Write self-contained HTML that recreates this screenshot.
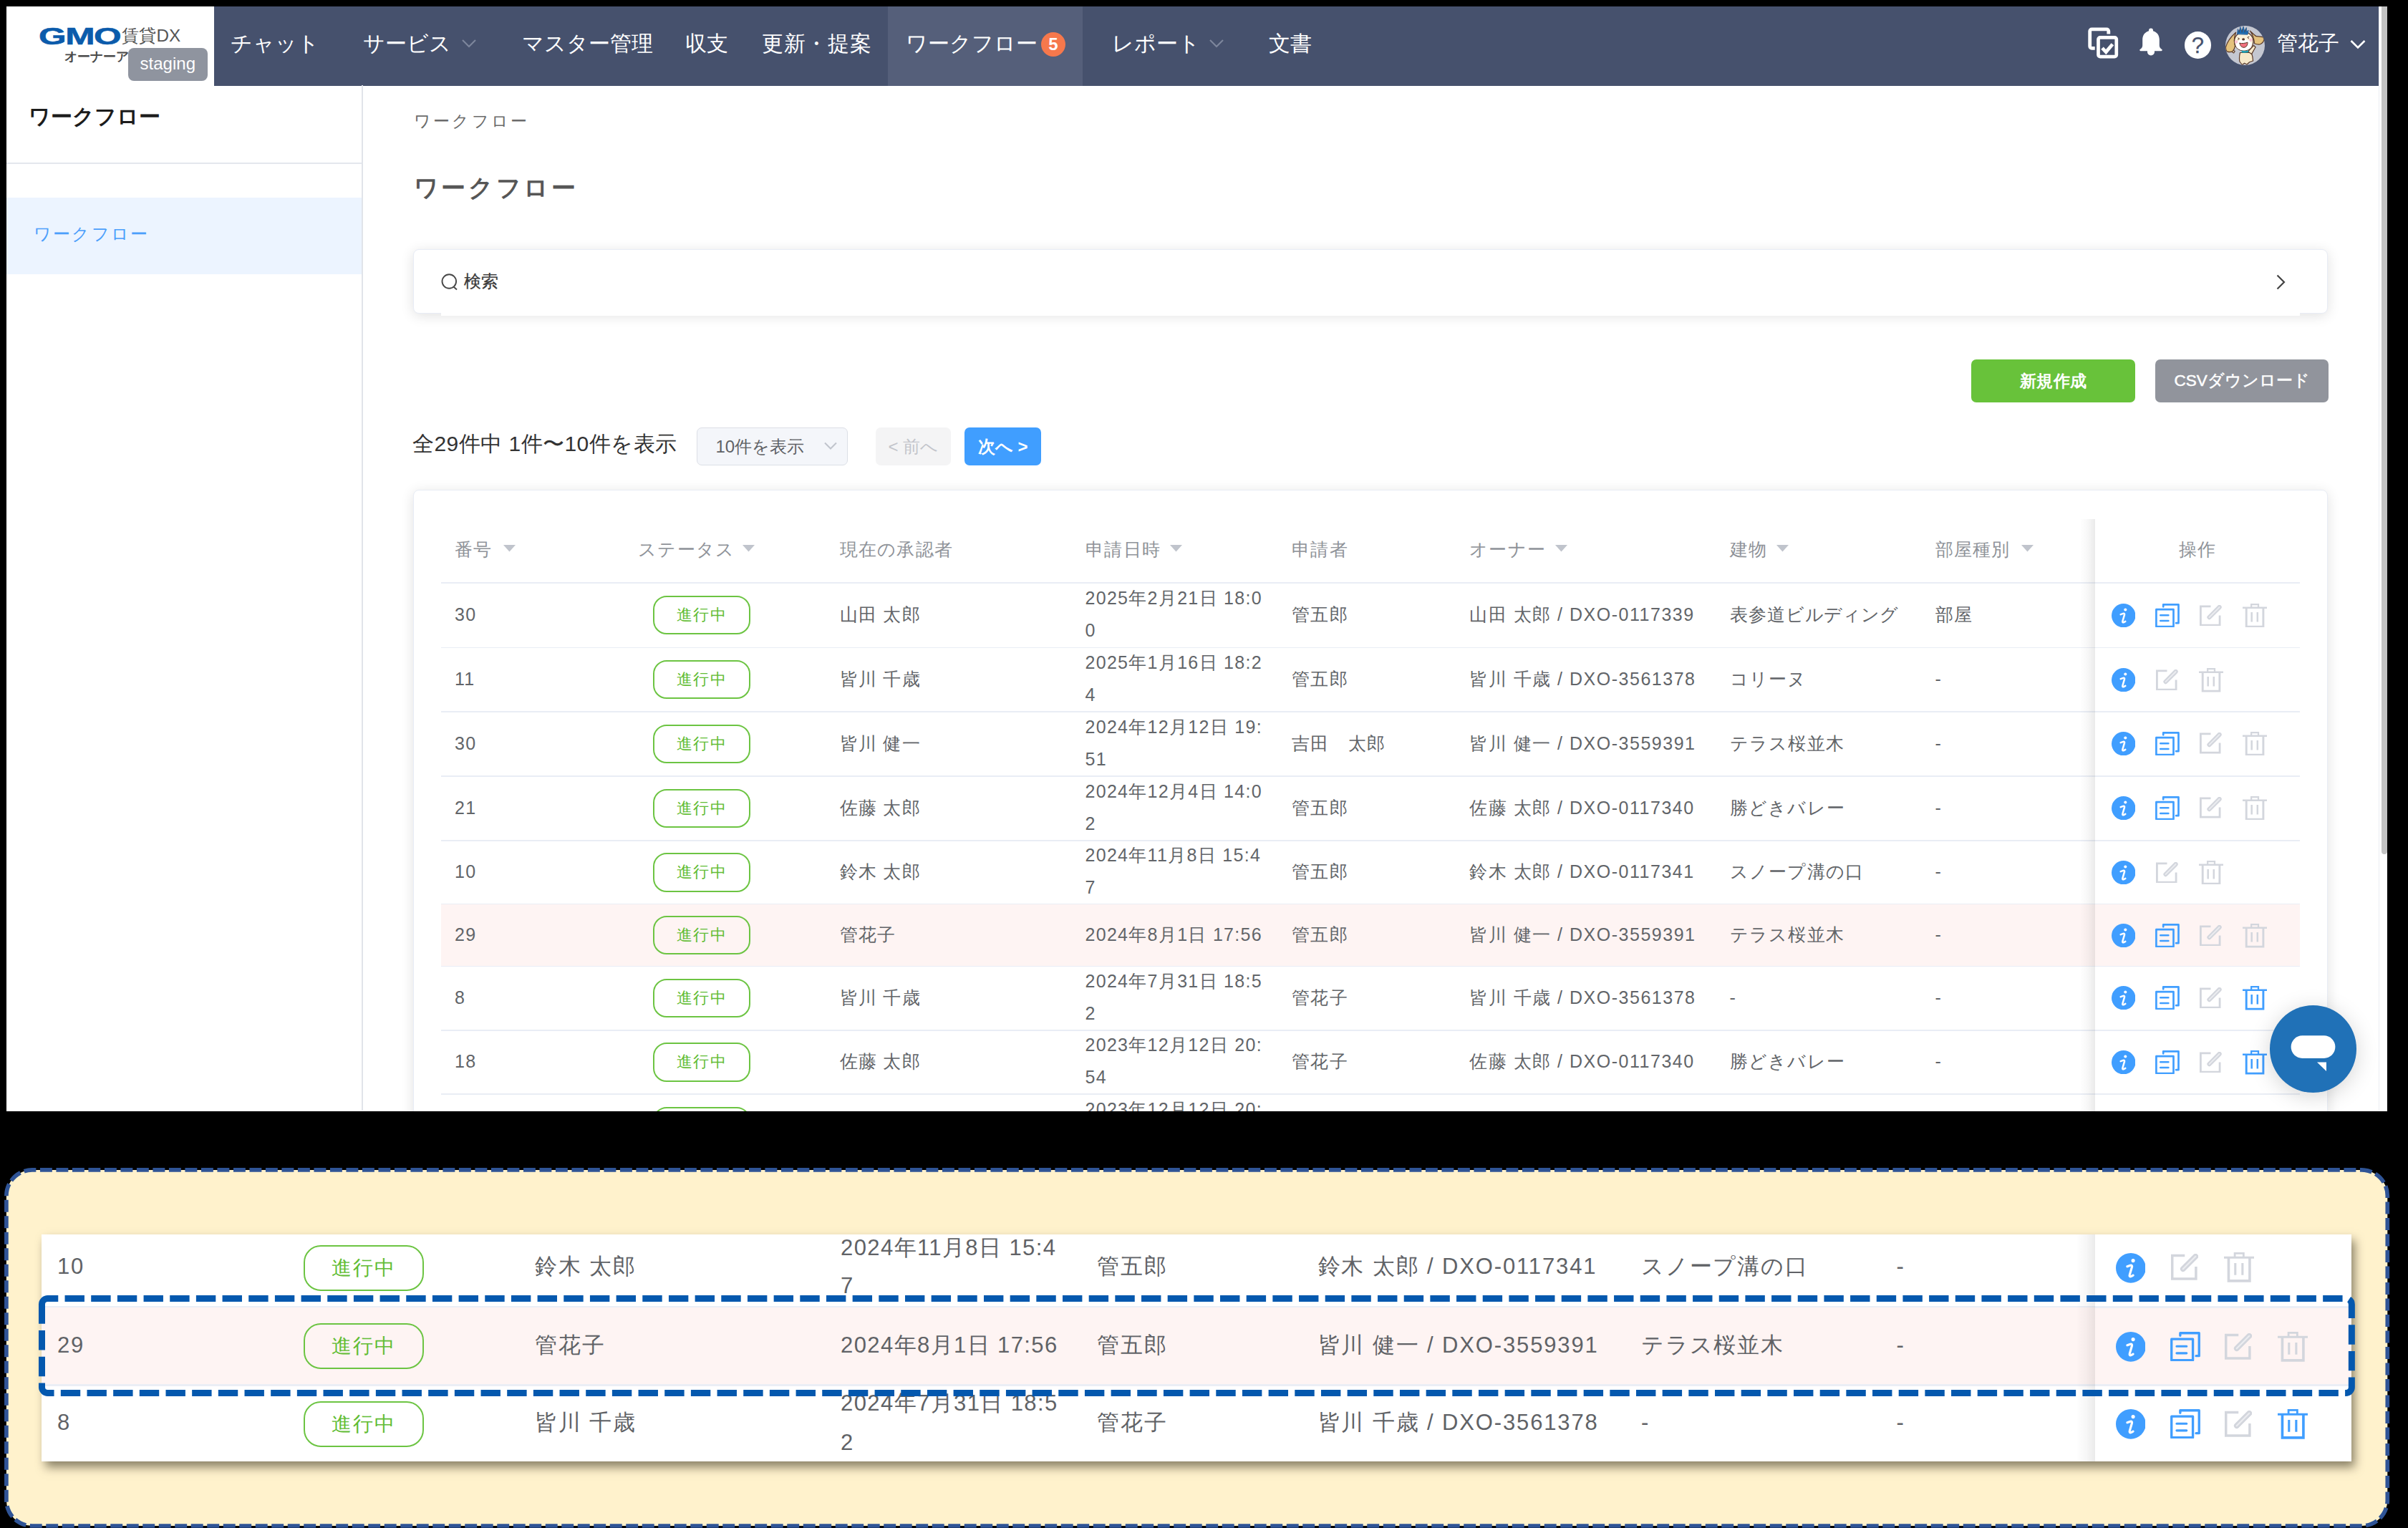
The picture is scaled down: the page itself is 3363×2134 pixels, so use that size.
<!DOCTYPE html>
<html lang="ja">
<head>
<meta charset="utf-8">
<title>ワークフロー</title>
<style>
html,body{margin:0;padding:0;}
body{width:3363px;height:2134px;background:#000;overflow:hidden;position:relative;
 font-family:"Liberation Sans",sans-serif;}
div,svg,span.a{position:absolute;box-sizing:border-box;}
div{white-space:nowrap;}
.j{position:static;display:inline-block;vertical-align:top;text-align-last:justify;}
#shot{left:9px;top:9px;width:3325px;height:1542.7px;overflow:hidden;background:#fff;}
#shot>.in{left:-9px;top:-9px;width:3363px;height:2134px;}
.t{letter-spacing:1.3px;}.to{letter-spacing:1.52px;}
.hl{left:616px;width:2596px;height:1.6px;background:#e9edf5;}
.bd{border:2px solid #6cc442;border-radius:19px;color:#62bd35;text-align:center;}
#zoom{left:58px;top:1724px;width:3226px;height:317px;background:#fff;box-shadow:4.5px 8px 13px rgba(20,15,0,.5);}
#zoom>.in{left:-58px;top:-1724px;width:3363px;height:2134px;overflow:visible;}
#zoomclip{left:0;top:0;width:3226px;height:317px;overflow:hidden;}
.z{letter-spacing:1.75px;}.zd{letter-spacing:1.4px;}.zo{letter-spacing:1.87px;}
</style>
</head>
<body>

<div id="shot"><div class="in">
<div style="left:298.5px;top:9px;width:3023.5px;height:110.6px;background:#46516d;"></div>
<div style="left:1240px;top:9px;width:272px;height:110.6px;background:#555f7a;"></div>
<div style="left:53.5px;top:33px;height:34px;line-height:34px;font-size:34px;font-weight:bold;color:#0b5bab;transform-origin:0 50%;transform:scaleX(1.46);letter-spacing:-1px;-webkit-text-stroke:.6px #0b5bab;">GMO</div>
<div style="left:170px;top:33px;height:34px;line-height:34px;font-size:24px;color:#555;transform-origin:0 50%;transform:scaleX(1.01);">賃貸DX</div>
<div style="left:89.5px;top:66.5px;height:24px;line-height:24px;font-size:18px;color:#4a4a4a;font-weight:bold;width:126.02px;text-align-last:justify;">オーナーアプリ</div>
<div style="left:179px;top:66.5px;width:110.6px;height:46.1px;background:#8f949f;border-radius:8px;"></div>
<div style="left:179px;top:73.5px;height:30px;line-height:30px;font-size:24px;color:#fff;width:110.6px;text-align:center;">staging</div>
<div style="left:322px;top:41px;height:40px;line-height:40px;font-size:30px;color:#fff;width:124.02px;text-align-last:justify;">チャット</div>
<div style="left:506.6px;top:41px;height:40px;line-height:40px;font-size:30px;color:#fff;width:123.02px;text-align-last:justify;">サービス</div>
<div style="left:729px;top:41px;height:40px;line-height:40px;font-size:30px;color:#fff;width:183.02px;text-align-last:justify;">マスター管理</div>
<div style="left:956.8px;top:41px;height:40px;line-height:40px;font-size:30px;color:#fff;width:60.02px;text-align-last:justify;">収支</div>
<div style="left:1064px;top:41px;height:40px;line-height:40px;font-size:30px;color:#fff;letter-spacing:.7px;width:153.52px;text-align-last:justify;">更新・提案</div>
<div style="left:1265px;top:41px;height:40px;line-height:40px;font-size:30px;color:#fff;width:184.02px;text-align-last:justify;">ワークフロー</div>
<div style="left:1553px;top:41px;height:40px;line-height:40px;font-size:30px;color:#fff;width:123.02px;text-align-last:justify;">レポート</div>
<div style="left:1772px;top:41px;height:40px;line-height:40px;font-size:30px;color:#fff;width:60.02px;text-align-last:justify;">文書</div>
<svg style="left:643.7px;top:53px" width="22" height="16" viewBox="0 0 22 16" fill="none" stroke="#7d869c" stroke-width="2.2"><path d="M2 3l9 9l9-9"/></svg>
<svg style="left:1688px;top:53px" width="22" height="16" viewBox="0 0 22 16" fill="none" stroke="#7d869c" stroke-width="2.2"><path d="M2 3l9 9l9-9"/></svg>
<div style="left:1454px;top:45px;width:34px;height:34px;background:#f6784c;border-radius:50%;"></div>
<div style="left:1454px;top:45px;height:34px;line-height:34px;font-size:24px;color:#fff;width:34px;text-align:center;font-weight:bold;">5</div>
<svg style="left:2914px;top:36px" width="47" height="47" viewBox="0 0 47 47" fill="none" stroke="#fff" stroke-width="4.8" stroke-linejoin="round"><path d="M11.7 31.3H7.4a2.7 2.7 0 0 1-2.7-2.7V7.5a2.7 2.7 0 0 1 2.7-2.7H28.1a2.7 2.7 0 0 1 2.7 2.7V11.4"/><rect x="16.5" y="16.3" width="25.3" height="26.8" rx="2.6" stroke-width="4.7"/><path d="M22 31.2l5.2 5.4L36.4 25.8" stroke-width="4.8" stroke-linejoin="miter"/></svg>
<svg style="left:2986px;top:38px" width="36" height="42" viewBox="0 0 36 42" fill="#fff"><path d="M18 1.5a3 3 0 0 1 3 3v.8c5.5 1.4 8.8 6.2 8.8 12v8.2c0 2.5 1.5 4.2 3.5 5.6c.8.6.5 2.1-.7 2.1H3.4c-1.2 0-1.5-1.5-.7-2.1c2-1.4 3.5-3.1 3.5-5.6v-8.2c0-5.8 3.3-10.6 8.8-12v-.8a3 3 0 0 1 3-3z"/><path d="M13 33h10v1.5a5 5 0 0 1-10 0z"/></svg>
<div style="left:3050.5px;top:44px;width:37.5px;height:37.5px;background:#fff;border-radius:50%;"></div>
<div style="left:3050.5px;top:45.8px;height:36px;line-height:36px;font-size:31px;color:#46516d;width:37.5px;text-align:center;-webkit-text-stroke:.25px #46516d;">?</div>
<svg style="left:3108px;top:36px" width="55" height="55" viewBox="0 0 55 55"><defs><clipPath id="av"><circle cx="27.5" cy="27.5" r="27.5"/></clipPath></defs><circle cx="27.5" cy="27.5" r="27.5" fill="#c4c7d1"/><g clip-path="url(#av)" stroke="#5b3a29" stroke-width="1.2" stroke-linejoin="round" stroke-linecap="round"><path d="M20.5 37.5c-1 4-1.3 8.5-.6 12.5l3.5 4.5l3.2-2.3l3.4 1.8l3.6-3.2l5-1.8c-.3-4-1-8-2.3-11.5z" fill="#f6e8c9"/><path d="M31.5 36l8-8.5l2.6 2.3l-5.6 9.8z" fill="#f6e8c9"/><path d="M13.2 35.5l-3.5-2l-1.5 2.5l3.5 2z" fill="#f6e8c9"/><path d="M14.6 9.2C8 15 2.5 22.5.6 29.5c-.4 3 .6 5.5 2 6.6c2.6.7 5.6.5 7.3-.2c2-2.3 3.2-5.2 3.6-7.8c-1.8-6-1.2-13 1.1-18.9z" fill="#e4c27d"/><path d="M34.5 7.2c3 2.8 6 5.8 8.6 7.5c3.5.3 7.4.2 9.8 1.3c1 2 .9 4.2.2 5.8c-1.3 2-3.2 3.5-5 4.2c-2.7.2-5.5-.3-7.6-1.3c-.4-6-2.5-12.5-6-17.5z" fill="#e4c27d"/><ellipse cx="25.7" cy="21.8" rx="13.2" ry="13.1" fill="#fdf3dc"/><ellipse cx="25.8" cy="26.8" rx="11.2" ry="7.8" fill="#fff" stroke="none"/><path d="M16.5 11.5l.8-7l2 3.8l1.5-6.8l2 6l2.3-6.5l1.5 6.5l2.7-5l.3 6l2.5-2.5l-1 6z" fill="#1d6db3" stroke="#1d4f86" stroke-width=".700"/><path d="M19 9.5l.8-4M23 9l.6-4M27 9l.8-3.5" stroke-width=".700" fill="none"/><ellipse cx="25.1" cy="18.9" rx="2" ry="1.6" fill="#5b3a29" stroke="none"/><path d="M17.5 17l2 1.2l-2 1.2M33 15.3l-2.2 1l1.8 1.5" fill="none" stroke-width="1"/><circle cx="15" cy="22.5" r="2.2" fill="#f9c4d4" stroke="none"/><circle cx="35.5" cy="19.8" r="2.2" fill="#f9c4d4" stroke="none"/><path d="M20 24.3c3.5.6 7.5.2 11-1.2c.2 3.8-1.8 7-5 7.2c-3.2.2-5.7-2.5-6-6z" fill="#f0707f" stroke-width="1"/><path d="M22.7 34.6c3 .8 6.4.7 9.4-.3v2.7c-3 1-6.4 1.1-9.4.3z" fill="#19a0b5" stroke="none"/></g></svg>
<div style="left:3180px;top:40px;height:40px;line-height:40px;font-size:29px;color:#fff;width:87.02px;text-align-last:justify;">管花子</div>
<svg style="left:3281px;top:54px" width="24" height="17" viewBox="0 0 24 17" fill="none" stroke="#fff" stroke-width="2.6"><path d="M2.5 3l9.5 9.5L21.5 3"/></svg>
<div style="left:3322px;top:9px;width:12px;height:1542px;background:#fff;border-left:1px solid #eceef2;"></div>
<div style="left:3326px;top:9px;width:8px;height:1184px;background:#c3c3c3;border-radius:0 0 5px 5px;"></div>
<div style="left:505px;top:119.3px;width:1.5px;height:1431.7px;background:#e1e4ea;"></div>
<div style="left:40px;top:143.3px;height:40px;line-height:40px;font-size:29.8px;color:#1c1c1c;font-weight:bold;width:184.02px;text-align-last:justify;">ワークフロー</div>
<div style="left:9px;top:227px;width:496px;height:2px;background:#e4e7ed;"></div>
<div style="left:9px;top:276px;width:496px;height:107px;background:#ecf4ff;"></div>
<div style="left:47px;top:309.5px;height:34px;line-height:34px;font-size:24px;color:#4c9ffb;letter-spacing:2.2px;width:161.22px;text-align-last:justify;">ワークフロー</div>
<div style="left:578px;top:152.5px;height:32px;line-height:32px;font-size:23px;color:#6b6b6b;letter-spacing:3.2px;width:161.22px;text-align-last:justify;">ワークフロー</div>
<div style="left:577.5px;top:238.5px;height:46px;line-height:46px;font-size:34px;color:#565656;font-weight:bold;letter-spacing:3.7px;width:230.22px;text-align-last:justify;">ワークフロー</div>
<div style="left:577px;top:348px;width:2674px;height:89.6px;background:#fff;border:1.5px solid #e8ecf5;border-radius:8px;box-shadow:0 3px 18px rgba(0,0,0,.12);"></div>
<div style="left:615.5px;top:430px;width:2596.5px;height:10.6px;background:#fff;"></div>
<svg style="left:615px;top:381px" width="26" height="25" viewBox="0 0 26 25" fill="none" stroke="#484848" stroke-width="1.9"><circle cx="12.3" cy="12" r="9.8"/><path d="M18.5 19.5l4.5 4"/></svg>
<div style="left:648px;top:377px;height:32px;line-height:32px;font-size:23.5px;color:#3a3a3a;-webkit-text-stroke:.25px #3a3a3a;width:48.02px;text-align-last:justify;">検索</div>
<svg style="left:3176px;top:382px" width="18" height="24" viewBox="0 0 18 24" fill="none" stroke="#444" stroke-width="2.2"><path d="M4.5 2.5l9.5 9.5L4.5 21.5"/></svg>
<div style="left:2753.4px;top:501.7px;width:228.6px;height:60.3px;background:#68c23a;border-radius:7px;"></div>
<div style="left:2753.4px;top:515.5px;height:32px;line-height:32px;font-size:23px;color:#fff;width:228.6px;text-align:center;font-weight:bold;letter-spacing:.500px;"><span class="j" style="width:94.02px;">新規作成</span></div>
<div style="left:3010px;top:501.7px;width:242.3px;height:60.3px;background:#91949c;border-radius:7px;"></div>
<div style="left:3010px;top:515.5px;height:32px;line-height:32px;font-size:22.5px;color:#fff;width:242.3px;text-align:center;-webkit-text-stroke:.5px #fff;"><span class="j" style="width:189.29px;">CSVダウンロード</span></div>
<div style="left:576px;top:599px;height:42px;line-height:42px;font-size:30px;color:#333;letter-spacing:.45px;width:369.54px;text-align-last:justify;">全29件中 1件〜10件を表示</div>
<div style="left:973.4px;top:597px;width:210.3px;height:52.7px;background:#f4f6fa;border:1.5px solid #dcdfe6;border-radius:7px;"></div>
<div style="left:999.5px;top:606.5px;height:34px;line-height:34px;font-size:24px;color:#5f6266;width:123.72px;text-align-last:justify;">10件を表示</div>
<svg style="left:1150px;top:616px" width="20" height="14" viewBox="0 0 20 14" fill="none" stroke="#c0c4cc" stroke-width="2"><path d="M2 2.5l8 8l8-8"/></svg>
<div style="left:1222.6px;top:597px;width:105.4px;height:52.7px;background:#f4f4f5;border-radius:7px;"></div>
<div style="left:1222.6px;top:606.5px;height:34px;line-height:34px;font-size:24px;color:#c3c5cb;width:105.4px;text-align:center;"><span class="j" style="width:69.71px;">&lt; 前へ</span></div>
<div style="left:1347px;top:597px;width:107.3px;height:52.7px;background:#409eff;border-radius:7px;"></div>
<div style="left:1347px;top:606.5px;height:34px;line-height:34px;font-size:24px;color:#fff;width:107.3px;text-align:center;font-weight:bold;"><span class="j" style="width:69.71px;">次へ &gt;</span></div>
<div style="left:577px;top:684px;width:2674px;height:1016px;background:#fff;border:1.5px solid #e8ecf5;border-radius:8px;box-shadow:0 3px 18px rgba(0,0,0,.12);"></div>
<div class="t" style="left:635px;top:749px;height:36px;line-height:36px;font-size:25px;color:#8f9399;width:52.63px;text-align-last:justify;">番号</div>
<svg style="left:703px;top:761.2px" width="17" height="9.5" viewBox="0 0 17 9.5"><path d="M0 0h17l-8.5 9.5z" fill="#c0c4cc"/></svg>
<div class="t" style="left:891px;top:749px;height:36px;line-height:36px;font-size:25px;color:#8f9399;width:135.52px;text-align-last:justify;">ステータス</div>
<svg style="left:1036.5px;top:761.2px" width="17" height="9.5" viewBox="0 0 17 9.5"><path d="M0 0h17l-8.5 9.5z" fill="#c0c4cc"/></svg>
<div class="t" style="left:1172.5px;top:749px;height:36px;line-height:36px;font-size:25px;color:#8f9399;width:158.83px;text-align-last:justify;">現在の承認者</div>
<div class="t" style="left:1516px;top:749px;height:36px;line-height:36px;font-size:25px;color:#8f9399;width:105.22px;text-align-last:justify;">申請日時</div>
<svg style="left:1634px;top:761.2px" width="17" height="9.5" viewBox="0 0 17 9.5"><path d="M0 0h17l-8.5 9.5z" fill="#c0c4cc"/></svg>
<div class="t" style="left:1804px;top:749px;height:36px;line-height:36px;font-size:25px;color:#8f9399;width:78.93px;text-align-last:justify;">申請者</div>
<div class="t" style="left:2052px;top:749px;height:36px;line-height:36px;font-size:25px;color:#8f9399;width:107.22px;text-align-last:justify;">オーナー</div>
<svg style="left:2172.4px;top:761.2px" width="17" height="9.5" viewBox="0 0 17 9.5"><path d="M0 0h17l-8.5 9.5z" fill="#c0c4cc"/></svg>
<div class="t" style="left:2415.5px;top:749px;height:36px;line-height:36px;font-size:25px;color:#8f9399;width:52.63px;text-align-last:justify;">建物</div>
<svg style="left:2481.4px;top:761.2px" width="17" height="9.5" viewBox="0 0 17 9.5"><path d="M0 0h17l-8.5 9.5z" fill="#c0c4cc"/></svg>
<div class="t" style="left:2702.5px;top:749px;height:36px;line-height:36px;font-size:25px;color:#8f9399;width:105.22px;text-align-last:justify;">部屋種別</div>
<svg style="left:2822.7px;top:761.2px" width="17" height="9.5" viewBox="0 0 17 9.5"><path d="M0 0h17l-8.5 9.5z" fill="#c0c4cc"/></svg>
<div class="hl" style="top:813.3px"></div>
<div class="hl" style="top:903.5px"></div>
<div class="t" style="left:635px;top:839.8px;height:36px;line-height:36px;font-size:25px;color:#626569;">30</div>
<div class="bd t" style="left:912px;top:831.9px;width:135.8px;height:54.4px;line-height:49px;font-size:22px;"><span class="j" style="width:69.93px;">進行中</span></div>
<div class="t" style="left:1172.5px;top:839.8px;height:36px;line-height:36px;font-size:25px;color:#626569;width:113.47px;text-align-last:justify;">山田 太郎</div>
<div class="t" style="left:1515.5px;top:816.8px;height:36px;line-height:36px;font-size:25px;color:#626569;width:247.46px;text-align-last:justify;">2025年2月21日 18:0</div>
<div class="t" style="left:1515.5px;top:861.8px;height:36px;line-height:36px;font-size:25px;color:#626569;">0</div>
<div class="t" style="left:1804px;top:839.8px;height:36px;line-height:36px;font-size:25px;color:#626569;width:78.93px;text-align-last:justify;">管五郎</div>
<div class="to" style="left:2052px;top:839.8px;height:36px;line-height:36px;font-size:25px;color:#626569;width:314.66px;text-align-last:justify;">山田 太郎 / DXO-0117339</div>
<div class="t" style="left:2415.5px;top:839.8px;height:36px;line-height:36px;font-size:25px;color:#626569;width:236.13px;text-align-last:justify;">表参道<span style="letter-spacing:.2px">ビルディング</span></div>
<div class="t" style="left:2702.5px;top:839.8px;height:36px;line-height:36px;font-size:25px;color:#626569;width:52.63px;text-align-last:justify;">部屋</div>
<div class="hl" style="top:993.4px"></div>
<div class="t" style="left:635px;top:930px;height:36px;line-height:36px;font-size:25px;color:#626569;">11</div>
<div class="bd t" style="left:912px;top:922.1px;width:135.8px;height:54.4px;line-height:49px;font-size:22px;"><span class="j" style="width:69.93px;">進行中</span></div>
<div class="t" style="left:1172.5px;top:930px;height:36px;line-height:36px;font-size:25px;color:#626569;width:113.47px;text-align-last:justify;">皆川 千歳</div>
<div class="t" style="left:1515.5px;top:907px;height:36px;line-height:36px;font-size:25px;color:#626569;width:247.46px;text-align-last:justify;">2025年1月16日 18:2</div>
<div class="t" style="left:1515.5px;top:952px;height:36px;line-height:36px;font-size:25px;color:#626569;">4</div>
<div class="t" style="left:1804px;top:930px;height:36px;line-height:36px;font-size:25px;color:#626569;width:78.93px;text-align-last:justify;">管五郎</div>
<div class="to" style="left:2052px;top:930px;height:36px;line-height:36px;font-size:25px;color:#626569;width:316.52px;text-align-last:justify;">皆川 千歳 / DXO-3561378</div>
<div class="t" style="left:2415.5px;top:930px;height:36px;line-height:36px;font-size:25px;color:#626569;width:108.22px;text-align-last:justify;">コリーヌ</div>
<div class="t" style="left:2702.5px;top:930px;height:36px;line-height:36px;font-size:25px;color:#626569;">-</div>
<div class="hl" style="top:1083.1px"></div>
<div class="t" style="left:635px;top:1019.8px;height:36px;line-height:36px;font-size:25px;color:#626569;">30</div>
<div class="bd t" style="left:912px;top:1011.9px;width:135.8px;height:54.4px;line-height:49px;font-size:22px;"><span class="j" style="width:69.93px;">進行中</span></div>
<div class="t" style="left:1172.5px;top:1019.8px;height:36px;line-height:36px;font-size:25px;color:#626569;width:113.47px;text-align-last:justify;">皆川 健一</div>
<div class="t" style="left:1515.5px;top:996.8px;height:36px;line-height:36px;font-size:25px;color:#626569;width:247.46px;text-align-last:justify;">2024年12月12日 19:</div>
<div class="t" style="left:1515.5px;top:1041.8px;height:36px;line-height:36px;font-size:25px;color:#626569;">51</div>
<div class="t" style="left:1804px;top:1019.8px;height:36px;line-height:36px;font-size:25px;color:#626569;width:131.52px;text-align-last:justify;">吉田　太郎</div>
<div class="to" style="left:2052px;top:1019.8px;height:36px;line-height:36px;font-size:25px;color:#626569;width:316.52px;text-align-last:justify;">皆川 健一 / DXO-3559391</div>
<div class="t" style="left:2415.5px;top:1019.8px;height:36px;line-height:36px;font-size:25px;color:#626569;width:160.83px;text-align-last:justify;">テラス桜並木</div>
<div class="t" style="left:2702.5px;top:1019.8px;height:36px;line-height:36px;font-size:25px;color:#626569;">-</div>
<div class="hl" style="top:1173.1px"></div>
<div class="t" style="left:635px;top:1109.6px;height:36px;line-height:36px;font-size:25px;color:#626569;">21</div>
<div class="bd t" style="left:912px;top:1101.7px;width:135.8px;height:54.4px;line-height:49px;font-size:22px;"><span class="j" style="width:69.93px;">進行中</span></div>
<div class="t" style="left:1172.5px;top:1109.6px;height:36px;line-height:36px;font-size:25px;color:#626569;width:113.47px;text-align-last:justify;">佐藤 太郎</div>
<div class="t" style="left:1515.5px;top:1086.6px;height:36px;line-height:36px;font-size:25px;color:#626569;width:247.46px;text-align-last:justify;">2024年12月4日 14:0</div>
<div class="t" style="left:1515.5px;top:1131.6px;height:36px;line-height:36px;font-size:25px;color:#626569;">2</div>
<div class="t" style="left:1804px;top:1109.6px;height:36px;line-height:36px;font-size:25px;color:#626569;width:78.93px;text-align-last:justify;">管五郎</div>
<div class="to" style="left:2052px;top:1109.6px;height:36px;line-height:36px;font-size:25px;color:#626569;width:314.66px;text-align-last:justify;">佐藤 太郎 / DXO-0117340</div>
<div class="t" style="left:2415.5px;top:1109.6px;height:36px;line-height:36px;font-size:25px;color:#626569;width:161.83px;text-align-last:justify;">勝どきバレー</div>
<div class="t" style="left:2702.5px;top:1109.6px;height:36px;line-height:36px;font-size:25px;color:#626569;">-</div>
<div class="hl" style="top:1262.1px"></div>
<div class="t" style="left:635px;top:1199.1px;height:36px;line-height:36px;font-size:25px;color:#626569;">10</div>
<div class="bd t" style="left:912px;top:1191.2px;width:135.8px;height:54.4px;line-height:49px;font-size:22px;"><span class="j" style="width:69.93px;">進行中</span></div>
<div class="t" style="left:1172.5px;top:1199.1px;height:36px;line-height:36px;font-size:25px;color:#626569;width:113.47px;text-align-last:justify;">鈴木 太郎</div>
<div class="t" style="left:1515.5px;top:1176.1px;height:36px;line-height:36px;font-size:25px;color:#626569;width:245.6px;text-align-last:justify;">2024年11月8日 15:4</div>
<div class="t" style="left:1515.5px;top:1221.1px;height:36px;line-height:36px;font-size:25px;color:#626569;">7</div>
<div class="t" style="left:1804px;top:1199.1px;height:36px;line-height:36px;font-size:25px;color:#626569;width:78.93px;text-align-last:justify;">管五郎</div>
<div class="to" style="left:2052px;top:1199.1px;height:36px;line-height:36px;font-size:25px;color:#626569;width:314.66px;text-align-last:justify;">鈴木 太郎 / DXO-0117341</div>
<div class="t" style="left:2415.5px;top:1199.1px;height:36px;line-height:36px;font-size:25px;color:#626569;width:188.13px;text-align-last:justify;">スノープ溝の口</div>
<div class="t" style="left:2702.5px;top:1199.1px;height:36px;line-height:36px;font-size:25px;color:#626569;">-</div>
<div style="left:616px;top:1263.1px;width:2596px;height:86.4px;background:#fef4f3;"></div>
<div class="hl" style="top:1348.5px"></div>
<div class="t" style="left:635px;top:1286.8px;height:36px;line-height:36px;font-size:25px;color:#626569;">29</div>
<div class="bd t" style="left:912px;top:1278.9px;width:135.8px;height:54.4px;line-height:49px;font-size:22px;"><span class="j" style="width:69.93px;">進行中</span></div>
<div class="t" style="left:1172.5px;top:1286.8px;height:36px;line-height:36px;font-size:25px;color:#626569;width:78.93px;text-align-last:justify;">管花子</div>
<div class="t" style="left:1515.5px;top:1286.8px;height:36px;line-height:36px;font-size:25px;color:#626569;width:247.46px;text-align-last:justify;">2024年8月1日 17:56</div>
<div class="t" style="left:1804px;top:1286.8px;height:36px;line-height:36px;font-size:25px;color:#626569;width:78.93px;text-align-last:justify;">管五郎</div>
<div class="to" style="left:2052px;top:1286.8px;height:36px;line-height:36px;font-size:25px;color:#626569;width:316.52px;text-align-last:justify;">皆川 健一 / DXO-3559391</div>
<div class="t" style="left:2415.5px;top:1286.8px;height:36px;line-height:36px;font-size:25px;color:#626569;width:160.83px;text-align-last:justify;">テラス桜並木</div>
<div class="t" style="left:2702.5px;top:1286.8px;height:36px;line-height:36px;font-size:25px;color:#626569;">-</div>
<div class="hl" style="top:1438.4px"></div>
<div class="t" style="left:635px;top:1375px;height:36px;line-height:36px;font-size:25px;color:#626569;">8</div>
<div class="bd t" style="left:912px;top:1367px;width:135.8px;height:54.4px;line-height:49px;font-size:22px;"><span class="j" style="width:69.93px;">進行中</span></div>
<div class="t" style="left:1172.5px;top:1375px;height:36px;line-height:36px;font-size:25px;color:#626569;width:113.47px;text-align-last:justify;">皆川 千歳</div>
<div class="t" style="left:1515.5px;top:1352px;height:36px;line-height:36px;font-size:25px;color:#626569;width:247.46px;text-align-last:justify;">2024年7月31日 18:5</div>
<div class="t" style="left:1515.5px;top:1397px;height:36px;line-height:36px;font-size:25px;color:#626569;">2</div>
<div class="t" style="left:1804px;top:1375px;height:36px;line-height:36px;font-size:25px;color:#626569;width:78.93px;text-align-last:justify;">管花子</div>
<div class="to" style="left:2052px;top:1375px;height:36px;line-height:36px;font-size:25px;color:#626569;width:316.52px;text-align-last:justify;">皆川 千歳 / DXO-3561378</div>
<div class="t" style="left:2415.5px;top:1375px;height:36px;line-height:36px;font-size:25px;color:#626569;">-</div>
<div class="t" style="left:2702.5px;top:1375px;height:36px;line-height:36px;font-size:25px;color:#626569;">-</div>
<div class="hl" style="top:1527.2px"></div>
<div class="t" style="left:635px;top:1464.3px;height:36px;line-height:36px;font-size:25px;color:#626569;">18</div>
<div class="bd t" style="left:912px;top:1456.4px;width:135.8px;height:54.4px;line-height:49px;font-size:22px;"><span class="j" style="width:69.93px;">進行中</span></div>
<div class="t" style="left:1172.5px;top:1464.3px;height:36px;line-height:36px;font-size:25px;color:#626569;width:113.47px;text-align-last:justify;">佐藤 太郎</div>
<div class="t" style="left:1515.5px;top:1441.3px;height:36px;line-height:36px;font-size:25px;color:#626569;width:247.46px;text-align-last:justify;">2023年12月12日 20:</div>
<div class="t" style="left:1515.5px;top:1486.3px;height:36px;line-height:36px;font-size:25px;color:#626569;">54</div>
<div class="t" style="left:1804px;top:1464.3px;height:36px;line-height:36px;font-size:25px;color:#626569;width:78.93px;text-align-last:justify;">管花子</div>
<div class="to" style="left:2052px;top:1464.3px;height:36px;line-height:36px;font-size:25px;color:#626569;width:314.66px;text-align-last:justify;">佐藤 太郎 / DXO-0117340</div>
<div class="t" style="left:2415.5px;top:1464.3px;height:36px;line-height:36px;font-size:25px;color:#626569;width:161.83px;text-align-last:justify;">勝どきバレー</div>
<div class="t" style="left:2702.5px;top:1464.3px;height:36px;line-height:36px;font-size:25px;color:#626569;">-</div>
<div class="hl" style="top:1617px"></div>
<div class="t" style="left:635px;top:1553.6px;height:36px;line-height:36px;font-size:25px;color:#626569;">17</div>
<div class="bd t" style="left:912px;top:1545.7px;width:135.8px;height:54.4px;line-height:49px;font-size:22px;"><span class="j" style="width:69.93px;">進行中</span></div>
<div class="t" style="left:1172.5px;top:1553.6px;height:36px;line-height:36px;font-size:25px;color:#626569;width:113.47px;text-align-last:justify;">佐藤 太郎</div>
<div class="t" style="left:1515.5px;top:1530.6px;height:36px;line-height:36px;font-size:25px;color:#626569;width:247.46px;text-align-last:justify;">2023年12月12日 20:</div>
<div class="t" style="left:1515.5px;top:1575.6px;height:36px;line-height:36px;font-size:25px;color:#626569;">53</div>
<div class="t" style="left:1804px;top:1553.6px;height:36px;line-height:36px;font-size:25px;color:#626569;width:78.93px;text-align-last:justify;">管花子</div>
<div class="to" style="left:2052px;top:1553.6px;height:36px;line-height:36px;font-size:25px;color:#626569;width:314.66px;text-align-last:justify;">佐藤 太郎 / DXO-0117340</div>
<div class="t" style="left:2415.5px;top:1553.6px;height:36px;line-height:36px;font-size:25px;color:#626569;width:161.83px;text-align-last:justify;">勝どきバレー</div>
<div class="t" style="left:2702.5px;top:1553.6px;height:36px;line-height:36px;font-size:25px;color:#626569;">-</div>
<div style="left:2905px;top:725px;width:21.5px;height:975px;background:linear-gradient(to right,rgba(0,0,0,0),rgba(0,0,0,.03) 50%,rgba(0,0,0,.085));"></div>
<div style="left:2926px;top:725px;width:286px;height:975px;background:#fff;"></div>
<div class="t" style="left:2926px;top:748.5px;height:36px;line-height:36px;font-size:25px;color:#8f9399;width:286px;text-align:center;"><span class="j" style="width:52.63px;">操作</span></div>
<div class="hl" style="top:813.3px;left:2926px;width:286px"></div>
<div class="hl" style="top:903.5px;left:2926px;width:286px"></div>
<svg style="left:2949px;top:842.9px" width="33.4" height="33.4" viewBox="0 0 33.4 33.4"><circle cx="16.7" cy="16.7" r="16.7" fill="#409eff"/><circle cx="19.3" cy="8.5" r="2.05" fill="#fff"/><path d="M12.7 15.1l3.5-1.2c1.5-.500 2.2.300 1.8 1.7l-2.6 8.9c-.400 1.5.400 2.2 1.7 1.6l2.2-1.2" fill="none" stroke="#fff" stroke-width="2.5" stroke-linecap="round" stroke-linejoin="round"/></svg>
<svg style="left:3010.3px;top:842.9px" width="34" height="33.4" viewBox="0 0 34 33.4" fill="none" stroke="#409eff" stroke-width="2.7" stroke-linejoin="round" stroke-linecap="round"><path d="M1.4 8.2h24.1v23.8h-24.1z"/><path d="M11.2 4.3v-2.9h21.3v25.8h-3.4"/><path d="M7.2 16.3h11.2M7.2 24.1h11.2" stroke-width="2.5"/></svg>
<svg style="left:3072.3px;top:844.6px" width="30.6" height="29.6" viewBox="0 0 30.6 29.6" fill="none" stroke="#d3d6dd" stroke-width="2.8"><path d="M15.5 1.95H1.4v26.25h26.7V14.5"/><path d="M13.5 17.1L27.6 3" stroke-width="6.2" stroke-linecap="round"/><path d="M13.5 17.1L27.6 3" stroke="#fff" stroke-opacity=".55" stroke-width="1.8" stroke-linecap="round"/></svg>
<svg style="left:3131.7px;top:842.9px" width="34.1" height="33.6" viewBox="0 0 34.1 33.6" fill="none" stroke="#d3d6dd"><path d="M0 5.8h34.1" stroke-width="2.5"/><path d="M12.15 5.8V1.15h9.85V5.8" stroke-width="2.25"/><path d="M5.2 5.8V32.1h23.7V5.8" stroke-width="2.9"/><path d="M12.7 12.1v13.5M20.8 12.1v13.5" stroke-width="2.5"/></svg>
<div class="hl" style="top:993.4px;left:2926px;width:286px"></div>
<svg style="left:2949px;top:933.0999999999999px" width="33.4" height="33.4" viewBox="0 0 33.4 33.4"><circle cx="16.7" cy="16.7" r="16.7" fill="#409eff"/><circle cx="19.3" cy="8.5" r="2.05" fill="#fff"/><path d="M12.7 15.1l3.5-1.2c1.5-.500 2.2.300 1.8 1.7l-2.6 8.9c-.400 1.5.400 2.2 1.7 1.6l2.2-1.2" fill="none" stroke="#fff" stroke-width="2.5" stroke-linecap="round" stroke-linejoin="round"/></svg>
<svg style="left:3011.3px;top:934.8px" width="30.6" height="29.6" viewBox="0 0 30.6 29.6" fill="none" stroke="#d3d6dd" stroke-width="2.8"><path d="M15.5 1.95H1.4v26.25h26.7V14.5"/><path d="M13.5 17.1L27.6 3" stroke-width="6.2" stroke-linecap="round"/><path d="M13.5 17.1L27.6 3" stroke="#fff" stroke-opacity=".55" stroke-width="1.8" stroke-linecap="round"/></svg>
<svg style="left:3070.7px;top:933.0999999999999px" width="34.1" height="33.6" viewBox="0 0 34.1 33.6" fill="none" stroke="#d3d6dd"><path d="M0 5.8h34.1" stroke-width="2.5"/><path d="M12.15 5.8V1.15h9.85V5.8" stroke-width="2.25"/><path d="M5.2 5.8V32.1h23.7V5.8" stroke-width="2.9"/><path d="M12.7 12.1v13.5M20.8 12.1v13.5" stroke-width="2.5"/></svg>
<div class="hl" style="top:1083.1px;left:2926px;width:286px"></div>
<svg style="left:2949px;top:1021.7px" width="33.4" height="33.4" viewBox="0 0 33.4 33.4"><circle cx="16.7" cy="16.7" r="16.7" fill="#409eff"/><circle cx="19.3" cy="8.5" r="2.05" fill="#fff"/><path d="M12.7 15.1l3.5-1.2c1.5-.500 2.2.300 1.8 1.7l-2.6 8.9c-.400 1.5.400 2.2 1.7 1.6l2.2-1.2" fill="none" stroke="#fff" stroke-width="2.5" stroke-linecap="round" stroke-linejoin="round"/></svg>
<svg style="left:3010.3px;top:1021.7px" width="34" height="33.4" viewBox="0 0 34 33.4" fill="none" stroke="#409eff" stroke-width="2.7" stroke-linejoin="round" stroke-linecap="round"><path d="M1.4 8.2h24.1v23.8h-24.1z"/><path d="M11.2 4.3v-2.9h21.3v25.8h-3.4"/><path d="M7.2 16.3h11.2M7.2 24.1h11.2" stroke-width="2.5"/></svg>
<svg style="left:3072.3px;top:1023.4000000000001px" width="30.6" height="29.6" viewBox="0 0 30.6 29.6" fill="none" stroke="#d3d6dd" stroke-width="2.8"><path d="M15.5 1.95H1.4v26.25h26.7V14.5"/><path d="M13.5 17.1L27.6 3" stroke-width="6.2" stroke-linecap="round"/><path d="M13.5 17.1L27.6 3" stroke="#fff" stroke-opacity=".55" stroke-width="1.8" stroke-linecap="round"/></svg>
<svg style="left:3131.7px;top:1021.7px" width="34.1" height="33.6" viewBox="0 0 34.1 33.6" fill="none" stroke="#d3d6dd"><path d="M0 5.8h34.1" stroke-width="2.5"/><path d="M12.15 5.8V1.15h9.85V5.8" stroke-width="2.25"/><path d="M5.2 5.8V32.1h23.7V5.8" stroke-width="2.9"/><path d="M12.7 12.1v13.5M20.8 12.1v13.5" stroke-width="2.5"/></svg>
<div class="hl" style="top:1173.1px;left:2926px;width:286px"></div>
<svg style="left:2949px;top:1111.6px" width="33.4" height="33.4" viewBox="0 0 33.4 33.4"><circle cx="16.7" cy="16.7" r="16.7" fill="#409eff"/><circle cx="19.3" cy="8.5" r="2.05" fill="#fff"/><path d="M12.7 15.1l3.5-1.2c1.5-.500 2.2.300 1.8 1.7l-2.6 8.9c-.400 1.5.400 2.2 1.7 1.6l2.2-1.2" fill="none" stroke="#fff" stroke-width="2.5" stroke-linecap="round" stroke-linejoin="round"/></svg>
<svg style="left:3010.3px;top:1111.6px" width="34" height="33.4" viewBox="0 0 34 33.4" fill="none" stroke="#409eff" stroke-width="2.7" stroke-linejoin="round" stroke-linecap="round"><path d="M1.4 8.2h24.1v23.8h-24.1z"/><path d="M11.2 4.3v-2.9h21.3v25.8h-3.4"/><path d="M7.2 16.3h11.2M7.2 24.1h11.2" stroke-width="2.5"/></svg>
<svg style="left:3072.3px;top:1113.3px" width="30.6" height="29.6" viewBox="0 0 30.6 29.6" fill="none" stroke="#d3d6dd" stroke-width="2.8"><path d="M15.5 1.95H1.4v26.25h26.7V14.5"/><path d="M13.5 17.1L27.6 3" stroke-width="6.2" stroke-linecap="round"/><path d="M13.5 17.1L27.6 3" stroke="#fff" stroke-opacity=".55" stroke-width="1.8" stroke-linecap="round"/></svg>
<svg style="left:3131.7px;top:1111.6px" width="34.1" height="33.6" viewBox="0 0 34.1 33.6" fill="none" stroke="#d3d6dd"><path d="M0 5.8h34.1" stroke-width="2.5"/><path d="M12.15 5.8V1.15h9.85V5.8" stroke-width="2.25"/><path d="M5.2 5.8V32.1h23.7V5.8" stroke-width="2.9"/><path d="M12.7 12.1v13.5M20.8 12.1v13.5" stroke-width="2.5"/></svg>
<div class="hl" style="top:1262.1px;left:2926px;width:286px"></div>
<svg style="left:2949px;top:1201.8px" width="33.4" height="33.4" viewBox="0 0 33.4 33.4"><circle cx="16.7" cy="16.7" r="16.7" fill="#409eff"/><circle cx="19.3" cy="8.5" r="2.05" fill="#fff"/><path d="M12.7 15.1l3.5-1.2c1.5-.500 2.2.300 1.8 1.7l-2.6 8.9c-.400 1.5.400 2.2 1.7 1.6l2.2-1.2" fill="none" stroke="#fff" stroke-width="2.5" stroke-linecap="round" stroke-linejoin="round"/></svg>
<svg style="left:3011.3px;top:1203.5px" width="30.6" height="29.6" viewBox="0 0 30.6 29.6" fill="none" stroke="#d3d6dd" stroke-width="2.8"><path d="M15.5 1.95H1.4v26.25h26.7V14.5"/><path d="M13.5 17.1L27.6 3" stroke-width="6.2" stroke-linecap="round"/><path d="M13.5 17.1L27.6 3" stroke="#fff" stroke-opacity=".55" stroke-width="1.8" stroke-linecap="round"/></svg>
<svg style="left:3070.7px;top:1201.8px" width="34.1" height="33.6" viewBox="0 0 34.1 33.6" fill="none" stroke="#d3d6dd"><path d="M0 5.8h34.1" stroke-width="2.5"/><path d="M12.15 5.8V1.15h9.85V5.8" stroke-width="2.25"/><path d="M5.2 5.8V32.1h23.7V5.8" stroke-width="2.9"/><path d="M12.7 12.1v13.5M20.8 12.1v13.5" stroke-width="2.5"/></svg>
<div style="left:2926px;top:1263.1px;width:286px;height:86.4px;background:#fef4f3;"></div>
<div class="hl" style="top:1348.5px;left:2926px;width:286px"></div>
<svg style="left:2949px;top:1290.1px" width="33.4" height="33.4" viewBox="0 0 33.4 33.4"><circle cx="16.7" cy="16.7" r="16.7" fill="#409eff"/><circle cx="19.3" cy="8.5" r="2.05" fill="#fff"/><path d="M12.7 15.1l3.5-1.2c1.5-.500 2.2.300 1.8 1.7l-2.6 8.9c-.400 1.5.400 2.2 1.7 1.6l2.2-1.2" fill="none" stroke="#fff" stroke-width="2.5" stroke-linecap="round" stroke-linejoin="round"/></svg>
<svg style="left:3010.3px;top:1290.1px" width="34" height="33.4" viewBox="0 0 34 33.4" fill="none" stroke="#409eff" stroke-width="2.7" stroke-linejoin="round" stroke-linecap="round"><path d="M1.4 8.2h24.1v23.8h-24.1z"/><path d="M11.2 4.3v-2.9h21.3v25.8h-3.4"/><path d="M7.2 16.3h11.2M7.2 24.1h11.2" stroke-width="2.5"/></svg>
<svg style="left:3072.3px;top:1291.8px" width="30.6" height="29.6" viewBox="0 0 30.6 29.6" fill="none" stroke="#d3d6dd" stroke-width="2.8"><path d="M15.5 1.95H1.4v26.25h26.7V14.5"/><path d="M13.5 17.1L27.6 3" stroke-width="6.2" stroke-linecap="round"/><path d="M13.5 17.1L27.6 3" stroke="#fff" stroke-opacity=".55" stroke-width="1.8" stroke-linecap="round"/></svg>
<svg style="left:3131.7px;top:1290.1px" width="34.1" height="33.6" viewBox="0 0 34.1 33.6" fill="none" stroke="#d3d6dd"><path d="M0 5.8h34.1" stroke-width="2.5"/><path d="M12.15 5.8V1.15h9.85V5.8" stroke-width="2.25"/><path d="M5.2 5.8V32.1h23.7V5.8" stroke-width="2.9"/><path d="M12.7 12.1v13.5M20.8 12.1v13.5" stroke-width="2.5"/></svg>
<div class="hl" style="top:1438.4px;left:2926px;width:286px"></div>
<svg style="left:2949px;top:1377px" width="33.4" height="33.4" viewBox="0 0 33.4 33.4"><circle cx="16.7" cy="16.7" r="16.7" fill="#409eff"/><circle cx="19.3" cy="8.5" r="2.05" fill="#fff"/><path d="M12.7 15.1l3.5-1.2c1.5-.500 2.2.300 1.8 1.7l-2.6 8.9c-.400 1.5.400 2.2 1.7 1.6l2.2-1.2" fill="none" stroke="#fff" stroke-width="2.5" stroke-linecap="round" stroke-linejoin="round"/></svg>
<svg style="left:3010.3px;top:1377px" width="34" height="33.4" viewBox="0 0 34 33.4" fill="none" stroke="#409eff" stroke-width="2.7" stroke-linejoin="round" stroke-linecap="round"><path d="M1.4 8.2h24.1v23.8h-24.1z"/><path d="M11.2 4.3v-2.9h21.3v25.8h-3.4"/><path d="M7.2 16.3h11.2M7.2 24.1h11.2" stroke-width="2.5"/></svg>
<svg style="left:3072.3px;top:1378.7px" width="30.6" height="29.6" viewBox="0 0 30.6 29.6" fill="none" stroke="#d3d6dd" stroke-width="2.8"><path d="M15.5 1.95H1.4v26.25h26.7V14.5"/><path d="M13.5 17.1L27.6 3" stroke-width="6.2" stroke-linecap="round"/><path d="M13.5 17.1L27.6 3" stroke="#fff" stroke-opacity=".55" stroke-width="1.8" stroke-linecap="round"/></svg>
<svg style="left:3131.7px;top:1377px" width="34.1" height="33.6" viewBox="0 0 34.1 33.6" fill="none" stroke="#409eff"><path d="M0 5.8h34.1" stroke-width="2.5"/><path d="M12.15 5.8V1.15h9.85V5.8" stroke-width="2.25"/><path d="M5.2 5.8V32.1h23.7V5.8" stroke-width="2.9"/><path d="M12.7 12.1v13.5M20.8 12.1v13.5" stroke-width="2.5"/></svg>
<div class="hl" style="top:1527.2px;left:2926px;width:286px"></div>
<svg style="left:2949px;top:1467px" width="33.4" height="33.4" viewBox="0 0 33.4 33.4"><circle cx="16.7" cy="16.7" r="16.7" fill="#409eff"/><circle cx="19.3" cy="8.5" r="2.05" fill="#fff"/><path d="M12.7 15.1l3.5-1.2c1.5-.500 2.2.300 1.8 1.7l-2.6 8.9c-.400 1.5.400 2.2 1.7 1.6l2.2-1.2" fill="none" stroke="#fff" stroke-width="2.5" stroke-linecap="round" stroke-linejoin="round"/></svg>
<svg style="left:3010.3px;top:1467px" width="34" height="33.4" viewBox="0 0 34 33.4" fill="none" stroke="#409eff" stroke-width="2.7" stroke-linejoin="round" stroke-linecap="round"><path d="M1.4 8.2h24.1v23.8h-24.1z"/><path d="M11.2 4.3v-2.9h21.3v25.8h-3.4"/><path d="M7.2 16.3h11.2M7.2 24.1h11.2" stroke-width="2.5"/></svg>
<svg style="left:3072.3px;top:1468.7px" width="30.6" height="29.6" viewBox="0 0 30.6 29.6" fill="none" stroke="#d3d6dd" stroke-width="2.8"><path d="M15.5 1.95H1.4v26.25h26.7V14.5"/><path d="M13.5 17.1L27.6 3" stroke-width="6.2" stroke-linecap="round"/><path d="M13.5 17.1L27.6 3" stroke="#fff" stroke-opacity=".55" stroke-width="1.8" stroke-linecap="round"/></svg>
<svg style="left:3131.7px;top:1467px" width="34.1" height="33.6" viewBox="0 0 34.1 33.6" fill="none" stroke="#409eff"><path d="M0 5.8h34.1" stroke-width="2.5"/><path d="M12.15 5.8V1.15h9.85V5.8" stroke-width="2.25"/><path d="M5.2 5.8V32.1h23.7V5.8" stroke-width="2.9"/><path d="M12.7 12.1v13.5M20.8 12.1v13.5" stroke-width="2.5"/></svg>
<div class="hl" style="top:1617px;left:2926px;width:286px"></div>
<svg style="left:2949px;top:1556.3px" width="33.4" height="33.4" viewBox="0 0 33.4 33.4"><circle cx="16.7" cy="16.7" r="16.7" fill="#409eff"/><circle cx="19.3" cy="8.5" r="2.05" fill="#fff"/><path d="M12.7 15.1l3.5-1.2c1.5-.500 2.2.300 1.8 1.7l-2.6 8.9c-.400 1.5.400 2.2 1.7 1.6l2.2-1.2" fill="none" stroke="#fff" stroke-width="2.5" stroke-linecap="round" stroke-linejoin="round"/></svg>
<svg style="left:3010.3px;top:1556.3px" width="34" height="33.4" viewBox="0 0 34 33.4" fill="none" stroke="#409eff" stroke-width="2.7" stroke-linejoin="round" stroke-linecap="round"><path d="M1.4 8.2h24.1v23.8h-24.1z"/><path d="M11.2 4.3v-2.9h21.3v25.8h-3.4"/><path d="M7.2 16.3h11.2M7.2 24.1h11.2" stroke-width="2.5"/></svg>
<svg style="left:3072.3px;top:1558px" width="30.6" height="29.6" viewBox="0 0 30.6 29.6" fill="none" stroke="#d3d6dd" stroke-width="2.8"><path d="M15.5 1.95H1.4v26.25h26.7V14.5"/><path d="M13.5 17.1L27.6 3" stroke-width="6.2" stroke-linecap="round"/><path d="M13.5 17.1L27.6 3" stroke="#fff" stroke-opacity=".55" stroke-width="1.8" stroke-linecap="round"/></svg>
<svg style="left:3131.7px;top:1556.3px" width="34.1" height="33.6" viewBox="0 0 34.1 33.6" fill="none" stroke="#409eff"><path d="M0 5.8h34.1" stroke-width="2.5"/><path d="M12.15 5.8V1.15h9.85V5.8" stroke-width="2.25"/><path d="M5.2 5.8V32.1h23.7V5.8" stroke-width="2.9"/><path d="M12.7 12.1v13.5M20.8 12.1v13.5" stroke-width="2.5"/></svg>
<div style="left:3169.5px;top:1404px;width:121px;height:121.5px;background:#2071b7;border-radius:50%;box-shadow:0 5px 30px rgba(0,0,0,.17);"></div>
<svg style="left:3199px;top:1446px" width="64" height="52" viewBox="0 0 64 52"><rect x=".600" y=".300" width="61.8" height="31.6" rx="15.8" fill="#fff"/><path d="M37 37.5h13V50z" fill="#fff"/></svg>
</div></div>
<svg style="left:0;top:1620px" width="3363" height="514" viewBox="0 1620 3363 514"><path d="M8.9 1669.9A36 36 0 0 1 44.9 1633.9H3298.3A36 36 0 0 1 3334.3 1669.9V2095A36 36 0 0 1 3298.3 2131H44.9A36 36 0 0 1 8.9 2095Z" fill="#fff2cc" stroke="#2f5496" stroke-width="5.7" stroke-dasharray="16.9 5.6"/></svg>
<div id="zoom"><div id="zoomclip"><div class="in" style="left:-58px;top:-1724px;width:3363px;height:2134px;">
<div style="left:58px;top:1824px;width:3226px;height:2.5px;background:#ebeef5;"></div>
<div class="z" style="left:80px;top:1747px;height:44px;line-height:44px;font-size:31px;color:#606266;">10</div>
<div class="bd z" style="left:423.5px;top:1739.4px;width:168.5px;height:64px;line-height:59px;font-size:27.5px;border-width:2.5px;border-radius:24px;"><span class="j" style="width:89.27px;">進行中</span></div>
<div class="z" style="left:747px;top:1747px;height:44px;line-height:44px;font-size:31px;color:#606266;width:141.4px;text-align-last:justify;">鈴木 太郎</div>
<div class="zd" style="left:1174px;top:1721px;height:44px;line-height:44px;font-size:31px;color:#606266;width:301.36px;text-align-last:justify;">2024年11月8日 15:4</div>
<div class="zd" style="left:1174px;top:1773.8px;height:44px;line-height:44px;font-size:31px;color:#606266;">7</div>
<div class="z" style="left:1532px;top:1747px;height:44px;line-height:44px;font-size:31px;color:#606266;width:98.27px;text-align-last:justify;">管五郎</div>
<div class="zo" style="left:1840.5px;top:1747px;height:44px;line-height:44px;font-size:31px;color:#606266;width:389.89px;text-align-last:justify;">鈴木 太郎 / DXO-0117341</div>
<div class="z" style="left:2292px;top:1747px;height:44px;line-height:44px;font-size:31px;color:#606266;width:233.27px;text-align-last:justify;">スノープ溝の口</div>
<div class="z" style="left:2648.5px;top:1747px;height:44px;line-height:44px;font-size:31px;color:#606266;">-</div>
<div style="left:58px;top:1825.5px;width:3226px;height:109px;background:#fef4f3;"></div>
<div style="left:58px;top:1933px;width:3226px;height:2.5px;background:#ebeef5;"></div>
<div class="z" style="left:80px;top:1856.5px;height:44px;line-height:44px;font-size:31px;color:#606266;">29</div>
<div class="bd z" style="left:423.5px;top:1848.3px;width:168.5px;height:64px;line-height:59px;font-size:27.5px;border-width:2.5px;border-radius:24px;"><span class="j" style="width:89.27px;">進行中</span></div>
<div class="z" style="left:747px;top:1856.5px;height:44px;line-height:44px;font-size:31px;color:#606266;width:98.27px;text-align-last:justify;">管花子</div>
<div class="zd" style="left:1174px;top:1856.5px;height:44px;line-height:44px;font-size:31px;color:#606266;width:303.66px;text-align-last:justify;">2024年8月1日 17:56</div>
<div class="z" style="left:1532px;top:1856.5px;height:44px;line-height:44px;font-size:31px;color:#606266;width:98.27px;text-align-last:justify;">管五郎</div>
<div class="zo" style="left:1840.5px;top:1856.5px;height:44px;line-height:44px;font-size:31px;color:#606266;width:392.19px;text-align-last:justify;">皆川 健一 / DXO-3559391</div>
<div class="z" style="left:2292px;top:1856.5px;height:44px;line-height:44px;font-size:31px;color:#606266;width:199.52px;text-align-last:justify;">テラス桜並木</div>
<div class="z" style="left:2648.5px;top:1856.5px;height:44px;line-height:44px;font-size:31px;color:#606266;">-</div>
<div style="left:58px;top:2042.5px;width:3226px;height:2.5px;background:#ebeef5;"></div>
<div class="z" style="left:80px;top:1965px;height:44px;line-height:44px;font-size:31px;color:#606266;">8</div>
<div class="bd z" style="left:423.5px;top:1957.4px;width:168.5px;height:64px;line-height:59px;font-size:27.5px;border-width:2.5px;border-radius:24px;"><span class="j" style="width:89.27px;">進行中</span></div>
<div class="z" style="left:747px;top:1965px;height:44px;line-height:44px;font-size:31px;color:#606266;width:141.4px;text-align-last:justify;">皆川 千歳</div>
<div class="zd" style="left:1174px;top:1938.3px;height:44px;line-height:44px;font-size:31px;color:#606266;width:303.66px;text-align-last:justify;">2024年7月31日 18:5</div>
<div class="zd" style="left:1174px;top:1992.6px;height:44px;line-height:44px;font-size:31px;color:#606266;">2</div>
<div class="z" style="left:1532px;top:1965px;height:44px;line-height:44px;font-size:31px;color:#606266;width:98.27px;text-align-last:justify;">管花子</div>
<div class="zo" style="left:1840.5px;top:1965px;height:44px;line-height:44px;font-size:31px;color:#606266;width:392.19px;text-align-last:justify;">皆川 千歳 / DXO-3561378</div>
<div class="z" style="left:2292px;top:1965px;height:44px;line-height:44px;font-size:31px;color:#606266;">-</div>
<div class="z" style="left:2648.5px;top:1965px;height:44px;line-height:44px;font-size:31px;color:#606266;">-</div>
<div style="left:2899px;top:1724px;width:27.5px;height:320px;background:linear-gradient(to right,rgba(0,0,0,0),rgba(0,0,0,.03) 50%,rgba(0,0,0,.085));"></div>
<div style="left:2926px;top:1724px;width:358px;height:320px;background:#fff;"></div>
<div style="left:2926px;top:1825.5px;width:358px;height:109px;background:#fef4f3;"></div>
<div style="left:2926px;top:1824px;width:358px;height:2.5px;background:#ebeef5;"></div>
<div style="left:2926px;top:1933px;width:358px;height:2.5px;background:#ebeef5;"></div>
<svg style="left:2954.5px;top:1749.95px" width="41.7" height="41.7" viewBox="0 0 33.4 33.4"><circle cx="16.7" cy="16.7" r="16.7" fill="#409eff"/><circle cx="19.3" cy="8.5" r="2.05" fill="#fff"/><path d="M12.7 15.1l3.5-1.2c1.5-.500 2.2.300 1.8 1.7l-2.6 8.9c-.400 1.5.400 2.2 1.7 1.6l2.2-1.2" fill="none" stroke="#fff" stroke-width="2.5" stroke-linecap="round" stroke-linejoin="round"/></svg>
<svg style="left:3032.15px;top:1751.3500000000001px" width="38" height="36.8" viewBox="0 0 30.6 29.6" fill="none" stroke="#d3d6dd" stroke-width="2.8"><path d="M15.5 1.95H1.4v26.25h26.7V14.5"/><path d="M13.5 17.1L27.6 3" stroke-width="6.2" stroke-linecap="round"/><path d="M13.5 17.1L27.6 3" stroke="#fff" stroke-opacity=".55" stroke-width="1.8" stroke-linecap="round"/></svg>
<svg style="left:3105.8px;top:1749.45px" width="42.4" height="41.8" viewBox="0 0 34.1 33.6" fill="none" stroke="#d3d6dd"><path d="M0 5.8h34.1" stroke-width="2.5"/><path d="M12.15 5.8V1.15h9.85V5.8" stroke-width="2.25"/><path d="M5.2 5.8V32.1h23.7V5.8" stroke-width="2.9"/><path d="M12.7 12.1v13.5M20.8 12.1v13.5" stroke-width="2.5"/></svg>
<svg style="left:2954.5px;top:1860.3500000000001px" width="41.7" height="41.7" viewBox="0 0 33.4 33.4"><circle cx="16.7" cy="16.7" r="16.7" fill="#409eff"/><circle cx="19.3" cy="8.5" r="2.05" fill="#fff"/><path d="M12.7 15.1l3.5-1.2c1.5-.500 2.2.300 1.8 1.7l-2.6 8.9c-.400 1.5.400 2.2 1.7 1.6l2.2-1.2" fill="none" stroke="#fff" stroke-width="2.5" stroke-linecap="round" stroke-linejoin="round"/></svg>
<svg style="left:3030.65px;top:1859.8500000000001px" width="42.1" height="41.4" viewBox="0 0 34 33.4" fill="none" stroke="#409eff" stroke-width="2.7" stroke-linejoin="round" stroke-linecap="round"><path d="M1.4 8.2h24.1v23.8h-24.1z"/><path d="M11.2 4.3v-2.9h21.3v25.8h-3.4"/><path d="M7.2 16.3h11.2M7.2 24.1h11.2" stroke-width="2.5"/></svg>
<svg style="left:3107.4px;top:1861.7500000000002px" width="38" height="36.8" viewBox="0 0 30.6 29.6" fill="none" stroke="#d3d6dd" stroke-width="2.8"><path d="M15.5 1.95H1.4v26.25h26.7V14.5"/><path d="M13.5 17.1L27.6 3" stroke-width="6.2" stroke-linecap="round"/><path d="M13.5 17.1L27.6 3" stroke="#fff" stroke-opacity=".55" stroke-width="1.8" stroke-linecap="round"/></svg>
<svg style="left:3181.05px;top:1859.8500000000001px" width="42.4" height="41.8" viewBox="0 0 34.1 33.6" fill="none" stroke="#d3d6dd"><path d="M0 5.8h34.1" stroke-width="2.5"/><path d="M12.15 5.8V1.15h9.85V5.8" stroke-width="2.25"/><path d="M5.2 5.8V32.1h23.7V5.8" stroke-width="2.9"/><path d="M12.7 12.1v13.5M20.8 12.1v13.5" stroke-width="2.5"/></svg>
<svg style="left:2954.5px;top:1968.3500000000001px" width="41.7" height="41.7" viewBox="0 0 33.4 33.4"><circle cx="16.7" cy="16.7" r="16.7" fill="#409eff"/><circle cx="19.3" cy="8.5" r="2.05" fill="#fff"/><path d="M12.7 15.1l3.5-1.2c1.5-.500 2.2.300 1.8 1.7l-2.6 8.9c-.400 1.5.400 2.2 1.7 1.6l2.2-1.2" fill="none" stroke="#fff" stroke-width="2.5" stroke-linecap="round" stroke-linejoin="round"/></svg>
<svg style="left:3030.65px;top:1967.8500000000001px" width="42.1" height="41.4" viewBox="0 0 34 33.4" fill="none" stroke="#409eff" stroke-width="2.7" stroke-linejoin="round" stroke-linecap="round"><path d="M1.4 8.2h24.1v23.8h-24.1z"/><path d="M11.2 4.3v-2.9h21.3v25.8h-3.4"/><path d="M7.2 16.3h11.2M7.2 24.1h11.2" stroke-width="2.5"/></svg>
<svg style="left:3107.4px;top:1969.7500000000002px" width="38" height="36.8" viewBox="0 0 30.6 29.6" fill="none" stroke="#d3d6dd" stroke-width="2.8"><path d="M15.5 1.95H1.4v26.25h26.7V14.5"/><path d="M13.5 17.1L27.6 3" stroke-width="6.2" stroke-linecap="round"/><path d="M13.5 17.1L27.6 3" stroke="#fff" stroke-opacity=".55" stroke-width="1.8" stroke-linecap="round"/></svg>
<svg style="left:3181.05px;top:1967.8500000000001px" width="42.4" height="41.8" viewBox="0 0 34.1 33.6" fill="none" stroke="#409eff"><path d="M0 5.8h34.1" stroke-width="2.5"/><path d="M12.15 5.8V1.15h9.85V5.8" stroke-width="2.25"/><path d="M5.2 5.8V32.1h23.7V5.8" stroke-width="2.9"/><path d="M12.7 12.1v13.5M20.8 12.1v13.5" stroke-width="2.5"/></svg>
</div></div></div>
<svg style="left:40px;top:1800px" width="3270" height="160" viewBox="40 1800 3270 160" fill="none"><path d="M58.5 1821.75A8.25 8.25 0 0 1 66.75 1813.5H3276.1A8.25 8.25 0 0 1 3284.35 1821.75V1937.15A8.25 8.25 0 0 1 3276.1 1945.4H66.75A8.25 8.25 0 0 1 58.5 1937.15Z" stroke="#0458ae" stroke-width="9" stroke-dasharray="27.4 9.27"/></svg>
</body></html>
